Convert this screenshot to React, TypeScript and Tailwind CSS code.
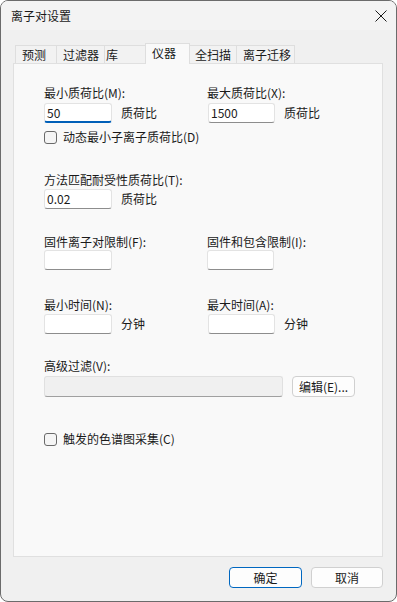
import React from "react";

function Input({ w, value, focused, className = "" }: { w: string; value?: string; focused?: boolean; className?: string }) {
  return (
    <div
      className={`${w} h-[20px] bg-white border border-[#e3e3e3] rounded-[3px] ${focused ? "border-b-2 border-b-[#005fb8]" : "border-b-[#8d8d8d]"} flex items-center pl-[2px] ${className}`}
    >
      <span className="leading-[16px]">{value}</span>
    </div>
  );
}

function Checkbox() {
  return <div className="w-[13px] h-[13px] rounded-[3px] border border-[#6a6a6a] bg-[#f5f5f5] shrink-0" />;
}

export default function App() {
  return (
    <div className="w-[397px] h-[602px] bg-white">
      <div className="w-[397px] h-[602px] rounded-[8px] border border-[#6b6b6b] bg-[#f0f0f0] overflow-hidden flex flex-col font-['Noto_Sans_CJK_SC',sans-serif] text-[12px] leading-[16px] text-[#1a1a1a]">
        {/* Title bar */}
        <div className="h-[29px] shrink-0 bg-[#f3f3f3] flex items-center justify-between pl-[10px] pr-[9px]">
          <span>离子对设置</span>
          <svg width="12" height="12" viewBox="0 0 12 12" className="mt-[1px]">
            <path d="M0.5 0.5 L11.5 11.5 M11.5 0.5 L0.5 11.5" stroke="#1a1a1a" strokeWidth="1" fill="none" />
          </svg>
        </div>

        {/* Tabs */}
        <div className="mt-[13px] h-[20px] shrink-0 flex items-end pl-[14px] relative z-10">
          <div className="w-[41px] h-[18px] border-l border-t border-[#dedede] bg-[#f2f2f2] pl-[6px] flex items-center">预测</div>
          <div className="w-[48px] h-[18px] border-l border-t border-[#dedede] bg-[#f2f2f2] pl-[6px] flex items-center">过滤器</div>
          <div className="w-[41px] h-[18px] border-l border-t border-[#dedede] bg-[#f2f2f2] pl-[1px] flex items-center">库</div>
          <div className="w-[45px] h-[21px] -mb-px border-l border-t border-r border-[#dedede] bg-[#f9f9f9] pl-[6px] pt-[1px]">仪器</div>
          <div className="w-[46px] h-[18px] border-t border-[#dedede] bg-[#f2f2f2] pl-[5px] flex items-center">全扫描</div>
          <div className="w-[59px] h-[18px] border-l border-t border-r border-[#dedede] bg-[#f2f2f2] pl-[6px] flex items-center">离子迁移</div>
        </div>

        {/* Panel */}
        <div className="ml-[12px] mr-[13px] h-[494px] shrink-0 border border-[#e0e0e0] bg-[#f9f9f9] pl-[30px] pt-[21px] flex flex-col">
          {/* Block A */}
          <div className="flex">
            <div className="w-[163px] flex flex-col">
              <span>最小质荷比(M):</span>
              <div className="mt-[2px] flex items-center">
                <Input w="w-[68px]" value="50" focused />
                <span className="ml-[9px]">质荷比</span>
              </div>
            </div>
            <div className="flex flex-col">
              <span>最大质荷比(X):</span>
              <div className="mt-[2px] flex items-center">
                <Input w="w-[67px]" value="1500" className="ml-[1px]" />
                <span className="ml-[9px]">质荷比</span>
              </div>
            </div>
          </div>

          <div className="mt-[6px] h-[16px] flex items-center">
            <Checkbox />
            <span className="ml-[6px]">动态最小子离子质荷比(D)</span>
          </div>

          {/* Block B */}
          <div className="mt-[27px] flex flex-col">
            <span>方法匹配耐受性质荷比(T):</span>
            <div className="mt-[1px] flex items-center">
              <Input w="w-[68px]" value="0.02" />
              <span className="ml-[9px]">质荷比</span>
            </div>
          </div>

          {/* Block C */}
          <div className="mt-[25px] flex">
            <div className="w-[163px] flex flex-col">
              <span>固件离子对限制(F):</span>
              <Input w="w-[68px]" />
            </div>
            <div className="flex flex-col">
              <span>固件和包含限制(I):</span>
              <Input w="w-[67px]" />
            </div>
          </div>

          {/* Block D */}
          <div className="mt-[27px] flex">
            <div className="w-[163px] flex flex-col">
              <span>最小时间(N):</span>
              <div className="mt-[1px] flex items-center">
                <Input w="w-[68px]" />
                <span className="ml-[9px]">分钟</span>
              </div>
            </div>
            <div className="flex flex-col">
              <span>最大时间(A):</span>
              <div className="mt-[1px] flex items-center">
                <Input w="w-[67px]" className="ml-[1px]" />
                <span className="ml-[9px]">分钟</span>
              </div>
            </div>
          </div>

          {/* Block E */}
          <div className="mt-[24px] flex flex-col">
            <span>高级过滤(V):</span>
            <div className="mt-[2px] flex items-center">
              <div className="w-[239px] h-[21px] bg-[#f0f0f0] border border-[#e0e0e0] border-b-[#a0a0a0] rounded-[3px]" />
              <div className="ml-[9px] w-[63px] h-[21px] bg-[#fdfdfd] border border-[#d0d0d0] rounded-[4px] flex items-center justify-center">
                编辑(E)...
              </div>
            </div>
          </div>

          <div className="mt-[34px] h-[16px] flex items-center">
            <Checkbox />
            <span className="ml-[6px]">触发的色谱图采集(C)</span>
          </div>
        </div>

        {/* Footer */}
        <div className="mt-[10px] flex justify-end gap-[9px] pr-[13px]">
          <div className="w-[73px] h-[21px] bg-[#fdfdfd] border border-[#0067c0] rounded-[4px] flex items-center justify-center">确定</div>
          <div className="w-[72px] h-[21px] bg-[#fdfdfd] border border-[#d0d0d0] rounded-[4px] flex items-center justify-center">取消</div>
        </div>
      </div>
    </div>
  );
}
